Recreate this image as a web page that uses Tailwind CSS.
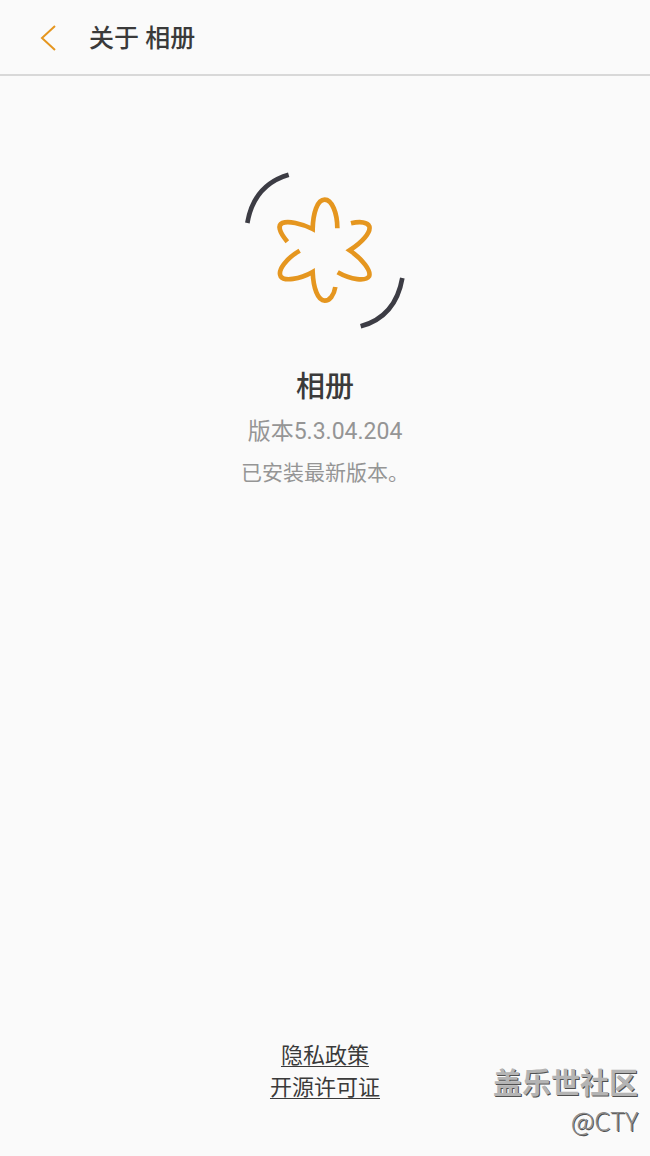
<!DOCTYPE html>
<html lang="zh-CN">

<head>
 <meta charset="UTF-8">
 <meta name="viewport" content="width=device-width, initial-scale=1.0">
 <title>关于 相册</title>
 <script src="https://cdn.jsdelivr.net/npm/@tailwindcss/browser@4"></script>
</head>

<body class="bg-[#fafafa] text-[#3a3a3a] font-['Roboto','Noto_Sans_CJK_SC',sans-serif]">
<div class="relative min-h-screen flex flex-col">
 <!-- 顶部导航 -->
 <header class="h-19 flex items-center pl-9 border-b-2 border-[#d8d8d8]">
  <button class="w-6 h-8 flex items-center justify-center" aria-label="返回">
   <svg class="w-6 h-8" viewBox="0 0 24 32" fill="none" stroke="#e5961f" stroke-width="2">
    <path d="M19 5 6 17 19 29"/>
   </svg>
  </button>
  <h1 class="ml-[29px] pt-1 text-[25px] leading-9 font-medium">关于 相册</h1>
 </header>

 <!-- 应用信息 -->
 <main class="flex-1 flex flex-col items-center pt-[89px]">
  <svg class="w-[180px] h-[170px]" viewBox="0 0 540 510" fill="none" aria-hidden="true">
   <g stroke="#3c3c44" stroke-width="14">
    <path d="M37 174C50 98 89 50 161 29"/>
    <path d="M502 339C489 414 450 464 377 484"/>
   </g>
   <g stroke="#e5961f" stroke-width="14" stroke-miterlimit="10">
    <path d="M157 230C131 199 128 180 142 174C160 167 198 175 233 192C234 144 247 104 269 104C291 104 307 144 307 190"/>
    <path d="M348 175C377 168 398 172 403 184C408 202 382 232 344 256C382 282 410 318 402 334C393 349 348 345 308 322"/>
    <path d="M194 257C154 280 127 316 137 334C147 349 193 344 233 321C235 368 248 407 269 407C284 407 297 391 301 366"/>
   </g>
  </svg>
  <h2 class="mt-8 text-[29px] leading-10 font-medium">相册</h2>
  <p class="mt-[7px] text-[23px] leading-9 text-[#959595]">版本5.3.04.204</p>
  <p class="mt-[7px] text-[21px] leading-8 text-[#959595]">已安装最新版本。</p>
 </main>

 <!-- 底部链接 -->
 <footer class="flex flex-col items-center pb-13 text-[22px] leading-8">
  <a href="#" class="underline decoration-1 underline-offset-3">隐私政策</a>
  <a href="#" class="underline decoration-1 underline-offset-3">开源许可证</a>
 </footer>

 <!-- 水印 -->
 <div class="absolute right-3 bottom-[18px] flex flex-col items-end">
  <span class="text-[29px] leading-9 font-bold text-[#b4b4b4] [text-shadow:1px_1px_0_#505050]">盖乐世社区</span>
  <span class="text-[26px] leading-9 font-light text-[#8a8a8a] font-['Noto_Sans_CJK_SC',sans-serif] [text-shadow:1px_1px_0_#505050]">@CTY</span>
 </div>
</div>
</body>

</html>
